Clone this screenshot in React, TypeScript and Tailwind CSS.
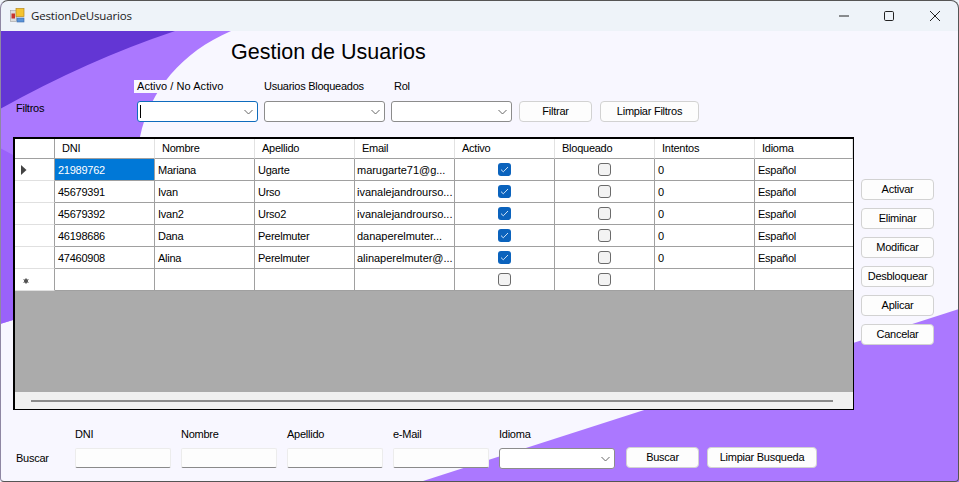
import React from "react";

const rows = [
  ["21989762", "Mariana", "Ugarte", "marugarte71@g..."],
  ["45679391", "Ivan", "Urso", "ivanalejandrourso..."],
  ["45679392", "Ivan2", "Urso2", "ivanalejandrourso..."],
  ["46198686", "Dana", "Perelmuter", "danaperelmuter..."],
  ["47460908", "Alina", "Perelmuter", "alinaperelmuter@..."],
];
const headers = ["DNI", "Nombre", "Apellido", "Email", "Activo", "Bloqueado", "Intentos", "Idioma"];

function Chevron() {
  return (
    <svg width="9" height="6" viewBox="0 0 9 6" className="shrink-0">
      <path d="M0.5 1 L4.5 5 L8.5 1" fill="none" stroke="#666" strokeWidth="1" />
    </svg>
  );
}

function Combo({ className, focused }: { className: string; focused?: boolean }) {
  return (
    <div
      className={`h-[21px] bg-white rounded-[3px] border flex items-center justify-between pr-[4px] pl-[2px] ${focused ? "border-[#0f6cbd]" : "border-[#8c8c8c]"} ${className}`}
    >
      {focused ? <div className="w-px h-[13px] bg-black" /> : <div />}
      <Chevron />
    </div>
  );
}

function Btn({ className, children }: { className: string; children: React.ReactNode }) {
  return (
    <button className={`h-[21px] bg-[#fdfdfd] border border-[#d2d2d2] rounded-[4px] text-[11px] tracking-[-0.25px] leading-none text-black flex items-center justify-center ${className}`}>
      {children}
    </button>
  );
}

function Check({ on }: { on: boolean }) {
  return on ? (
    <div className="w-[13px] h-[13px] rounded-[3px] bg-[#0b63bd] flex items-center justify-center">
      <svg width="9" height="7" viewBox="0 0 9 7">
        <path d="M1 3.6 L3.3 5.8 L8 1" fill="none" stroke="#cfe3f7" strokeWidth="1" />
      </svg>
    </div>
  ) : (
    <div className="w-[13px] h-[13px] rounded-[3px] bg-[#f3f3f3] border border-[#6b6b6b]" />
  );
}

function Cell({ children, className = "", pad = "pl-[3px]" }: { children?: React.ReactNode; className?: string; pad?: string }) {
  return (
    <div className={`h-[22px] border-r border-b border-[#a0a0a0] flex items-center pt-[1px] text-[11px] text-black overflow-hidden whitespace-nowrap ${pad} ${className}`}>
      {children}
    </div>
  );
}

function CheckCell({ on }: { on: boolean }) {
  return (
    <div className="h-[22px] border-r border-b border-[#a0a0a0] flex items-center justify-center pr-[1px]">
      <Check on={on} />
    </div>
  );
}

function RowHeader({ children }: { children?: React.ReactNode }) {
  return (
    <div className="h-[22px] bg-white border-r border-r-[#a0a0a0] border-b border-b-[#e0e0e0] flex items-center">
      {children}
    </div>
  );
}

function Grid() {
  return (
    <div className="w-[841px] h-[273px] border-l-2 border-t-2 border-r border-b border-black bg-[#ababab] flex flex-col shrink-0">
      <div className="grid grid-cols-[40px_repeat(7,100px)_98px] bg-white">
        <div className="h-[20px] border-r border-r-[#a0a0a0] border-b border-b-[#a0a0a0]" />
        {headers.map((h) => (
          <div key={h} className="h-[20px] border-r border-r-[#e2e2e2] border-b border-b-[#a0a0a0] flex items-center pl-[7px] text-[11px] text-black">
            {h}
          </div>
        ))}
        {rows.map((r, i) => (
          <React.Fragment key={r[0]}>
            <RowHeader>
              {i === 0 && (
                <svg width="6" height="10" viewBox="0 0 6 10" className="ml-[6px]">
                  <path d="M0 0 L5.5 5 L0 10 Z" fill="#444" />
                </svg>
              )}
            </RowHeader>
            <Cell className={i === 0 ? "bg-[#0078d7] text-white" : ""}>{r[0]}</Cell>
            <Cell>{r[1]}</Cell>
            <Cell>{r[2]}</Cell>
            <Cell pad="pl-[2px]" className="tracking-[-0.03px]">{r[3]}</Cell>
            <CheckCell on />
            <CheckCell on={false} />
            <Cell>0</Cell>
            <Cell className="border-r-0">Español</Cell>
          </React.Fragment>
        ))}
        <RowHeader>
          <svg width="6" height="6" viewBox="0 0 6 6" className="ml-[8px] mt-[3px]">
            <circle cx="3" cy="3" r="2" fill="#444" />
            <path d="M3 0 V6 M0.4 1.5 L5.6 4.5 M5.6 1.5 L0.4 4.5" stroke="#555" strokeWidth="0.8" />
          </svg>
        </RowHeader>
        <Cell />
        <Cell />
        <Cell />
        <Cell />
        <CheckCell on={false} />
        <CheckCell on={false} />
        <Cell />
        <Cell className="border-r-0" />
      </div>
      <div className="flex-1" />
      <div className="h-[17px] bg-[#f0f0f0] flex items-center pl-[16px]">
        <div className="w-[802px] h-[2px] bg-[#8a8a8a]" />
      </div>
    </div>
  );
}

export default function App() {
  return (
    <div className="relative w-[959px] h-[482px] overflow-hidden bg-[#f8f7ff] flex flex-col font-['Liberation_Sans',Arial,sans-serif] text-[11px] tracking-[-0.25px] text-black">
      <svg className="absolute inset-0" width="959" height="482" viewBox="0 0 959 482">
        <path d="M0 31 L231 31 C182 52 150 90 140 137 L135 200 L13 320 L0 324 Z" fill="#ab78ff" />
        <path d="M0 148 L13 155 L13 320 L0 324 Z" fill="#9a62fb" />
        <path d="M0 31 L175 31 Q88 60 0 109 Z" fill="#6336d4" />
        <path d="M959 309 L420 482 L959 482 Z" fill="#ab78ff" />
      </svg>

      <header className="relative h-[31px] bg-[#eef3f9] flex items-center shrink-0">
        <svg width="15" height="15" viewBox="0 0 15 15" className="ml-[10px]">
          <rect x="0.5" y="2.5" width="6" height="11" fill="#dcdcdc" stroke="#a0a0a0" strokeWidth="0.6" />
          <rect x="1.5" y="5.5" width="3.5" height="5" fill="#c8342c" />
          <rect x="6" y="0.5" width="8" height="8" fill="#f4c430" stroke="#b98a1c" strokeWidth="0.7" />
          <rect x="7" y="10" width="7" height="4" fill="#5a93d8" stroke="#3a6aa8" strokeWidth="0.6" />
        </svg>
        <span className="ml-[6px] text-[11.5px] text-[#1a1a1a] font-['Open_Sans',sans-serif] tracking-[-0.15px]">GestionDeUsuarios</span>
        <div className="ml-auto flex items-center h-full">
          <svg width="10" height="2" viewBox="0 0 10 2" className="mr-[35px]">
            <path d="M0 1 H10" stroke="#222" strokeWidth="1" />
          </svg>
          <svg width="10" height="10" viewBox="0 0 10 10" className="mr-[36px]">
            <rect x="0.5" y="0.5" width="9" height="9" rx="1.2" fill="none" stroke="#222" />
          </svg>
          <svg width="10" height="10" viewBox="0 0 10 10" className="mr-[19px]">
            <path d="M0 0 L10 10 M10 0 L0 10" stroke="#222" />
          </svg>
        </div>
      </header>

      <main className="relative flex-1 flex flex-col">
        <div className="h-[45px] pl-[231px] pt-[8px]">
          <h1 className="text-[21.5px] tracking-normal leading-[26px] text-black">Gestion de Usuarios</h1>
        </div>

        <div className="h-[21px] flex items-center">
          <span className="ml-[134px] w-[91px] h-[13px] leading-[13px] pl-[3px] bg-[#f8f7ff] tracking-[0.05px] whitespace-nowrap">Activo / No Activo</span>
          <span className="ml-[39px] w-[130px]">Usuarios Bloqueados</span>
          <span>Rol</span>
        </div>

        <div className="flex items-center h-[22px] mt-[3px]">
          <span className="pl-[16px] w-[137px] -mt-[6px]">Filtros</span>
          <Combo className="w-[121px] mt-[1px]" focused />
          <Combo className="w-[121px] ml-[6px] mt-[1px]" />
          <Combo className="w-[121px] ml-[6px] mt-[1px]" />
          <Btn className="w-[73px] ml-[7px]">Filtrar</Btn>
          <Btn className="w-[99px] ml-[8px]">Limpiar Filtros</Btn>
        </div>

        <div className="flex mt-[15px] pl-[13px]">
          <Grid />
          <div className="flex flex-col gap-[8px] ml-[7px] mt-[42px]">
            {["Activar", "Eliminar", "Modificar", "Desbloquear", "Aplicar", "Cancelar"].map((b) => (
              <Btn key={b} className="w-[73px]">{b}</Btn>
            ))}
          </div>
        </div>

        <div className="flex h-[14px] mt-[17px] items-center">
          <span className="ml-[75px] w-[106px]">DNI</span>
          <span className="w-[106px]">Nombre</span>
          <span className="w-[106px]">Apellido</span>
          <span className="w-[106px]">e-Mail</span>
          <span>Idioma</span>
        </div>

        <div className="flex items-center mt-[6px] h-[22px]">
          <span className="pl-[16px] w-[75px]">Buscar</span>
          {[0, 1, 2, 3].map((i) => (
            <div key={i} className="w-[96px] h-[20px] bg-[#fdfdfd] rounded-[2px] border border-[#ececec] border-b-[#8a8a8a] mr-[10px]" />
          ))}
          <Combo className="w-[116px] mt-[1px]" />
          <Btn className="w-[73px] ml-[11px] -mt-[1px]">Buscar</Btn>
          <Btn className="w-[110px] ml-[8px] -mt-[1px]">Limpiar Busqueda</Btn>
        </div>
      </main>

      <div className="absolute inset-0 rounded-t-[8px] rounded-b-[4px] border border-[#555] border-l-[#8f87a3] pointer-events-none" />
    </div>
  );
}
